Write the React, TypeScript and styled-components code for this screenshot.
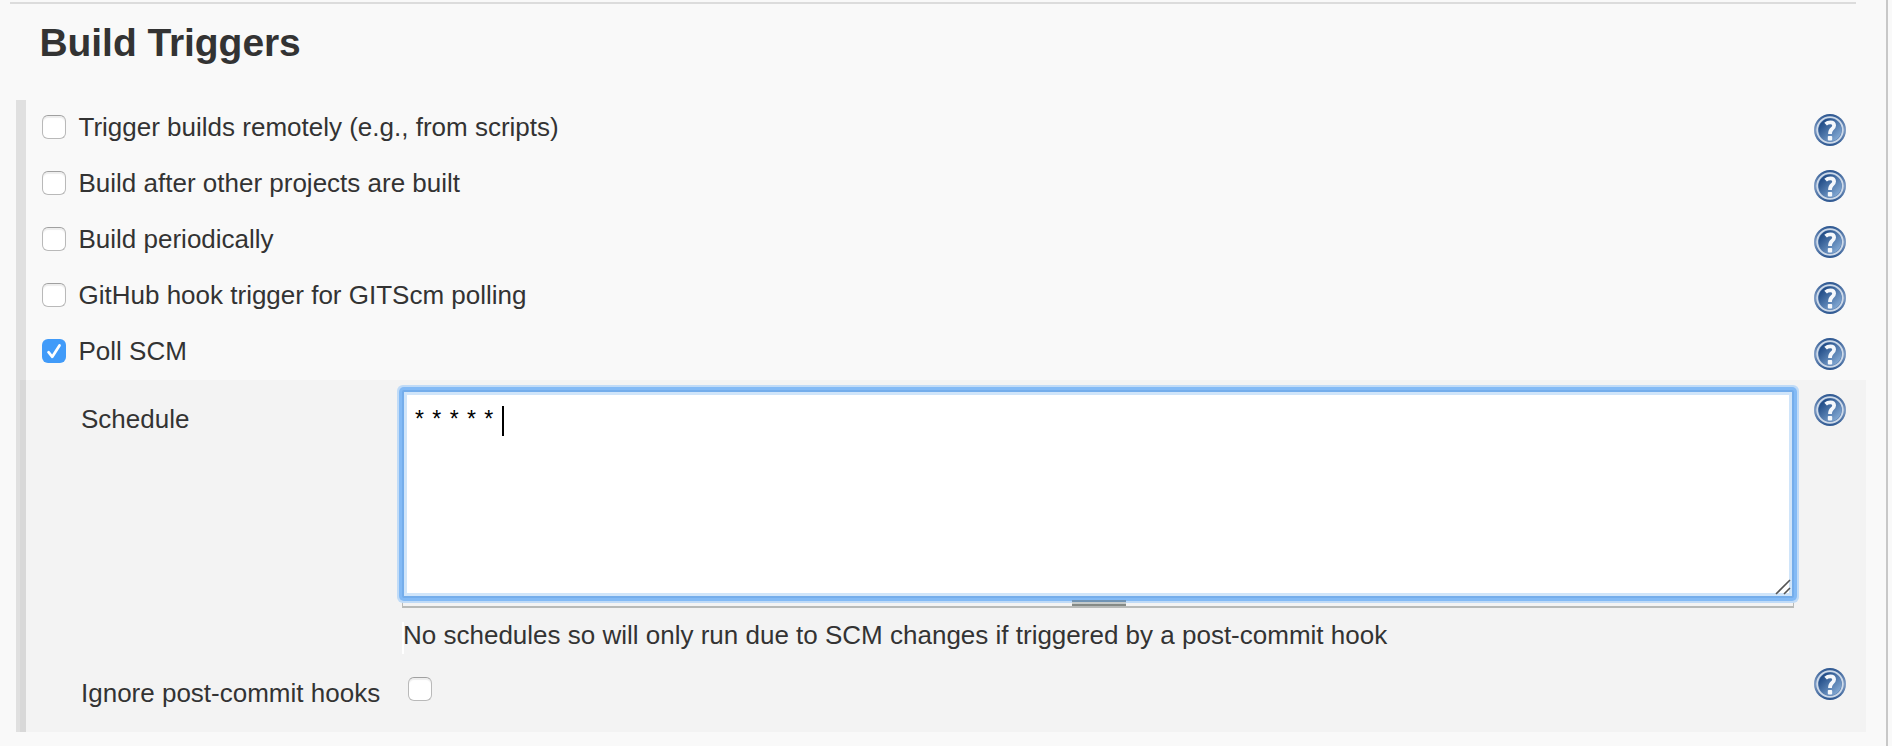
import React from 'react';
import styled, { createGlobalStyle } from 'styled-components';

const GlobalStyle = createGlobalStyle`
  * { box-sizing: border-box; }
  body { margin: 0; background: #f9f9f9; overflow: hidden; }
`;

const Page = styled.main`
  width: 1888px;
  height: 746px;
  padding: 2px 20px 0 10px;
  border-right: 2px solid #c8c8c8;
  background: #f9f9f9;
  color: #333;
  font: 26px/32px "Liberation Sans", Helvetica, Arial, sans-serif;
`;

const Divider = styled.div`
  width: 1846px;
  height: 2px;
  background: #dcdcdc;
`;

const Heading = styled.h1`
  margin: 15px 0 33px 29.5px;
  font-size: 39px;
  line-height: 48px;
  font-weight: 700;
  letter-spacing: -0.07px;
`;

const Section = styled.section`
  display: grid;
  grid-template-columns: 10px 1840px;
  width: 1850px;
  height: 632px;
  margin-left: 6px;
  background: linear-gradient(90deg, #e0e0e0 10px, transparent 10px);
`;

const Options = styled.div`
  grid-column: 2;
`;

const OptionRow = styled.div`
  display: flex;
  align-items: flex-start;
  height: 56px;
  padding: 14px 20px 0 16px;
`;

const OptionLabel = styled.label`
  flex: 1;
  display: flex;
  align-items: flex-start;
  gap: 12.5px;
`;

const Box = styled.input.attrs({ type: 'checkbox' })`
  appearance: none;
  flex: none;
  width: 24px;
  height: 24px;
  margin: 1px 0 0;
  border: 1px solid #b9b9b9;
  border-top-color: #a0a0a0;
  border-radius: 6px;
  background: #fff;
  box-shadow: inset 0 2px 1px #eee;

  &:checked {
    border: 0;
    box-shadow: none;
    background: #419bf9;
  }
`;

const BoxHolder = styled.span`
  display: grid;
  > * { grid-area: 1 / 1; }
`;

const Tick = styled.svg`
  width: 24px;
  height: 24px;
  margin-top: 1px;
`;

const Text = styled.span`
  white-space: nowrap;
  margin-top: -3px;
`;

const HelpIcon = styled.svg<{ $drop: number }>`
  display: block;
  width: 32px;
  height: 32px;
  margin-top: ${p => p.$drop}px;
`;

const Nested = styled.div`
  height: 352px;
  margin-left: -6px;
  padding: 10px 20px 0 61px;
  background: linear-gradient(90deg, #d8d8d8 6px, #f3f3f3 6px);
`;

const FieldRow = styled.div<{ $top?: number }>`
  display: grid;
  grid-template-columns: 321px 1392px 32px;
  justify-content: start;
  align-items: start;
  padding-top: ${p => p.$top ?? 0}px;

  > :last-child { margin-left: 20px; }
`;

const Name = styled.span<{ $top: number }>`
  padding-top: ${p => p.$top}px;
  white-space: nowrap;
`;

const Editor = styled.div`
  position: relative;
  height: 208px;
  padding: 12px 11px;
  background: #fff;
  border: 2px solid #74adeb;
  border-radius: 2px;
  color: #000;
  box-shadow: 0 0 0 3px #83baf5, 0 0 0 5px #c0dbf7, inset 0 0 0 3px #d0e5fa;
  display: flex;
`;

const Cron = styled.span`
  margin-top: -1px;
  font-size: 23px;
  letter-spacing: 1px;
  white-space: pre;
`;

const Caret = styled.i`
  width: 2px;
  height: 30px;
  margin: 2px 0 0 8px;
  background: #000;
`;

const Resizer = styled.svg`
  position: absolute;
  right: 1px;
  bottom: 1px;
  width: 16px;
  height: 16px;
`;

const Handle = styled.div`
  height: 10px;
  border: solid #b8bab8;
  border-width: 0 1px 2px;
  display: flex;
  justify-content: center;
  align-items: flex-end;
`;

const Grip = styled.span`
  position: relative;
  left: 1px;
  z-index: 1;
  width: 54px;
  height: 6px;
  background: linear-gradient(#6f93b4 2px, #c4cacb 2px 4px, #858a86 4px);
`;

const Message = styled.div`
  margin-top: 14px;
  height: 32px;
  line-height: 26px;
  border-left: 2px solid #fff;
  white-space: nowrap;
  text-indent: -1px;
`;

const BoxCell = styled.div`
  padding: 8px 0 0 6px;
`;

const Help = ({ drop = 0 }: { drop?: number }) => (
  <HelpIcon viewBox="0 0 32 32" aria-label="Help" $drop={drop}>
    <defs>
      <linearGradient id="disc" x1="0" y1="0" x2="1" y2="1">
        <stop offset=".15" stopColor="#204b86" />
        <stop offset=".9" stopColor="#86acd6" />
      </linearGradient>
      <linearGradient id="rim" x1="0" y1="0" x2="0" y2="1">
        <stop offset="0" stopColor="#2c5690" />
        <stop offset=".5" stopColor="#7f9cc4" />
        <stop offset="1" stopColor="#2c5690" />
      </linearGradient>
    </defs>
    <circle cx="16" cy="16" r="16" fill="url(#rim)" />
    <circle cx="16" cy="16" r="12.8" fill="#5b7fb0" stroke="#cfdbea" strokeWidth="1.8" />
    <circle cx="16" cy="16" r="11.4" fill="url(#disc)" />
    <path d="M11.6 10.2Q13.6 8.3 16.4 8.3Q20.1 8.3 20.1 11.6Q20.1 13.4 18 15Q16 16.6 16 20" fill="none" stroke="#f5f8fc" strokeWidth="3.8" />
    <rect x="13.8" y="22" width="4.4" height="4.4" rx=".8" fill="#f5f8fc" />
  </HelpIcon>
);

const Check = ({ checked = false }: { checked?: boolean }) => (
  <BoxHolder>
    <Box checked={checked} readOnly />
    {checked && (
      <Tick viewBox="0 0 24 24">
        <path d="M6.5 13.2L10.3 17.8L17.5 6.5" fill="none" stroke="#fff" strokeWidth="2.7" strokeLinecap="round" strokeLinejoin="round" />
      </Tick>
    )}
  </BoxHolder>
);

const triggers = [
  { label: 'Trigger builds remotely (e.g., from scripts)' },
  { label: 'Build after other projects are built' },
  { label: 'Build periodically' },
  { label: 'GitHub hook trigger for GITScm polling' },
  { label: 'Poll SCM', checked: true },
];

export default function App() {
  return (
    <Page>
      <GlobalStyle />
      <Divider />
      <Heading>Build Triggers</Heading>
      <Section>
        <Options>
          {triggers.map(t => (
            <OptionRow key={t.label}>
              <OptionLabel>
                <Check checked={t.checked} />
                <Text>{t.label}</Text>
              </OptionLabel>
              <Help />
            </OptionRow>
          ))}
          <Nested>
            <FieldRow>
              <Name $top={13}>Schedule</Name>
              <div>
                <Editor>
                  <Cron>* * * * *</Cron>
                  <Caret />
                  <Resizer viewBox="0 0 16 16">
                    <path d="M1 15L15 1M9 15L15 9" fill="none" stroke="#555" strokeWidth="1.6" />
                  </Resizer>
                </Editor>
                <Handle><Grip /></Handle>
                <Message>No schedules so will only run due to SCM changes if triggered by a post-commit hook</Message>
              </div>
              <Help drop={4} />
            </FieldRow>
            <FieldRow $top={14}>
              <Name $top={9}>Ignore post-commit hooks</Name>
              <BoxCell><Check /></BoxCell>
              <Help />
            </FieldRow>
          </Nested>
        </Options>
      </Section>
    </Page>
  );
}
